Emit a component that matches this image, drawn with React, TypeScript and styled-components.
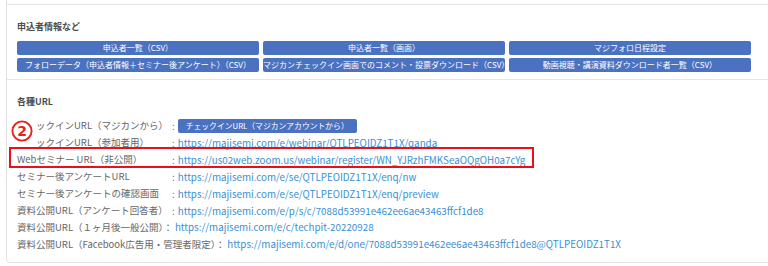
import styled, { createGlobalStyle } from "styled-components";

const GlobalStyle = createGlobalStyle`
  html, body {
    margin: 0;
    padding: 0;
    background: #fff;
    overflow: hidden;
  }
  body {
    font-family: "Noto Sans CJK JP", "DejaVu Sans", sans-serif;
    color: #666;
  }
`;

const ENTRY_BUTTONS = [
  "申込者一覧（CSV）",
  "申込者一覧（画面）",
  "マジフォロ日程設定",
  "フォローデータ（申込者情報＋セミナー後アンケート）（CSV）",
  "マジカンチェックイン画面でのコメント・投票ダウンロード（CSV）",
  "動画視聴・講演資料ダウンロード者一覧（CSV）",
];

const URL_ROWS = [
  { label: "チェックインURL（参加者用）", url: "https://majisemi.com/e/webinar/QTLPEOIDZ1T1X/qanda" },
  {
    label: "Webセミナー URL（非公開）",
    url: "https://us02web.zoom.us/webinar/register/WN_YJRzhFMKSeaOQgOH0a7cYg",
  },
  { label: "セミナー後アンケートURL", url: "https://majisemi.com/e/se/QTLPEOIDZ1T1X/enq/nw" },
  { label: "セミナー後アンケートの確認画面", url: "https://majisemi.com/e/se/QTLPEOIDZ1T1X/enq/preview" },
  {
    label: "資料公開URL（アンケート回答者）",
    url: "https://majisemi.com/e/p/s/c/7088d53991e462ee6ae43463ffcf1de8",
  },
];

export default function App() {
  return (
    <>
      <GlobalStyle />
      <Page>
        <Panel>
          <Stub />
          <Section>
            <Heading>申込者情報など</Heading>
            <ButtonGrid>
              {ENTRY_BUTTONS.map((label) => (
                <BlueButton key={label}>{label}</BlueButton>
              ))}
            </ButtonGrid>
          </Section>
          <Section $bottom={9}>
            <Heading>各種URL</Heading>
            <UrlTable>
              <Row>
                <Label>チェックインURL（マジカンから）</Label>
                <Value>
                  <Colon>:</Colon>
                  <SmallButton>チェックインURL（マジカンアカウントから）</SmallButton>
                </Value>
              </Row>
              {URL_ROWS.map(({ label, url }) => (
                <Row key={label}>
                  <Label>{label}</Label>
                  <Value>
                    <Colon>:</Colon>
                    <Link>{url}</Link>
                  </Value>
                </Row>
              ))}
            </UrlTable>
            <Line>
              資料公開URL（１ヶ月後一般公開）： <Link>https://majisemi.com/e/c/techpit-20220928</Link>
            </Line>
            <Line>
              資料公開URL（Facebook広告用・管理者限定）：{" "}
              <Link>https://majisemi.com/e/d/one/7088d53991e462ee6ae43463ffcf1de8@QTLPEOIDZ1T1X</Link>
            </Line>

            <StepMark>
              <svg width="22" height="22" viewBox="0 0 22 22">
                <circle cx="11" cy="11" r="9.6" fill="none" stroke="#e8231f" strokeWidth="1.9" />
                <text
                  x="11"
                  y="16"
                  textAnchor="middle"
                  fontSize="14"
                  fontWeight="bold"
                  fontFamily="'DejaVu Sans', sans-serif"
                  fill="#e8231f"
                >
                  2
                </text>
              </svg>
            </StepMark>
            <Highlight />
          </Section>
        </Panel>
      </Page>
    </>
  );
}

const Page = styled.div`
  padding-left: 6px;
  margin-top: -20px;
`;

const Panel = styled.div`
  border: 1px solid #e2e2e2;
  border-radius: 4px;
  margin-right: -20px;
  background: #fff;
`;

const Stub = styled.div`
  height: 23px;
`;

const Section = styled.div<{ $bottom?: number }>`
  position: relative;
  border-top: 1px solid #e6e6e6;
  padding: 15px 10px ${(p) => p.$bottom ?? 7}px;
`;

const Heading = styled.div`
  font-size: 9px;
  line-height: 14px;
  font-weight: bold;
  color: #4d4d4d;
  margin-bottom: 7px;
`;

const ButtonGrid = styled.div`
  display: grid;
  grid-template-columns: repeat(3, 242px);
  column-gap: 4px;
  row-gap: 3px;
`;

const BlueButton = styled.div`
  height: 14px;
  line-height: 14px;
  border-radius: 2px;
  background: #4b72c0;
  color: #fff;
  font-size: 8px;
  text-align: center;
  white-space: nowrap;
  overflow: hidden;
`;

const UrlTable = styled.div`
  display: grid;
  grid-template-columns: 155px auto;
  margin-top: 8px;
`;

const Row = styled.div`
  display: contents;
`;

const Label = styled.div`
  font-size: 9.5px;
  line-height: 17px;
  white-space: nowrap;
`;

const Value = styled.div`
  display: flex;
  align-items: center;
  height: 17px;
  font-size: 9.8px;
  white-space: nowrap;
`;

const Colon = styled.span`
  margin-right: 3px;
`;

const SmallButton = styled.span`
  height: 14px;
  line-height: 14px;
  padding: 0 8px;
  border-radius: 2px;
  background: #4b72c0;
  color: #fff;
  font-size: 7.8px;
`;

const Link = styled.a`
  color: #3a8fd4;
  font-size: 9.8px;
  text-decoration: none;
  cursor: pointer;
`;

const Line = styled.div`
  font-size: 9.5px;
  line-height: 17px;
  white-space: nowrap;
`;

const StepMark = styled.div`
  position: absolute;
  left: 2px;
  top: 36px;
  width: 26px;
  height: 33px;
  padding-top: 4px;
  box-sizing: border-box;
  background: #fff;
  display: flex;
  align-items: flex-start;
  justify-content: center;
`;

const Highlight = styled.div`
  position: absolute;
  left: 2px;
  top: 67px;
  width: 521px;
  height: 17px;
  border: 2px solid #e8101a;
  pointer-events: none;
`;
